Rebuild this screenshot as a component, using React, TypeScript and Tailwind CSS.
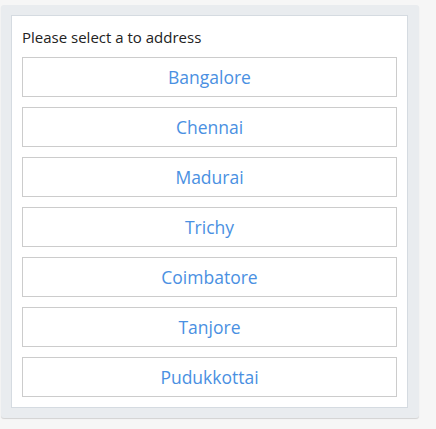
import React from "react";

const cities = ["Bangalore", "Chennai", "Madurai", "Trichy", "Coimbatore", "Tanjore", "Pudukkottai"];

export default function App() {
  return (
    <div className="w-[436px] h-[429px] bg-[#f6f6f6] pt-[5px] pl-px" style={{ fontFamily: '"Open Sans", sans-serif' }}>
      <div className="w-[418px] h-[413px] bg-[#e9ecef] rounded-[3px] shadow-[0_1px_1px_rgba(0,0,0,0.15)] pt-[10px] pl-[10px]">
        <div className="w-[397px] h-[393px] bg-white border border-[#d5dbe1] px-[10px] pt-[10px]">
          <div className="text-[15px] leading-[22px] text-[#222] h-[31px]">Please select a to address</div>
          <div className="flex flex-col gap-[10px]">
            {cities.map((c) => (
              <button
                key={c}
                className="h-[40px] w-full border border-[#cccccc] bg-white text-[17.5px] text-[#4a90e2] flex items-center justify-center"
              >
                {c}
              </button>
            ))}
          </div>
        </div>
      </div>
    </div>
  );
}
